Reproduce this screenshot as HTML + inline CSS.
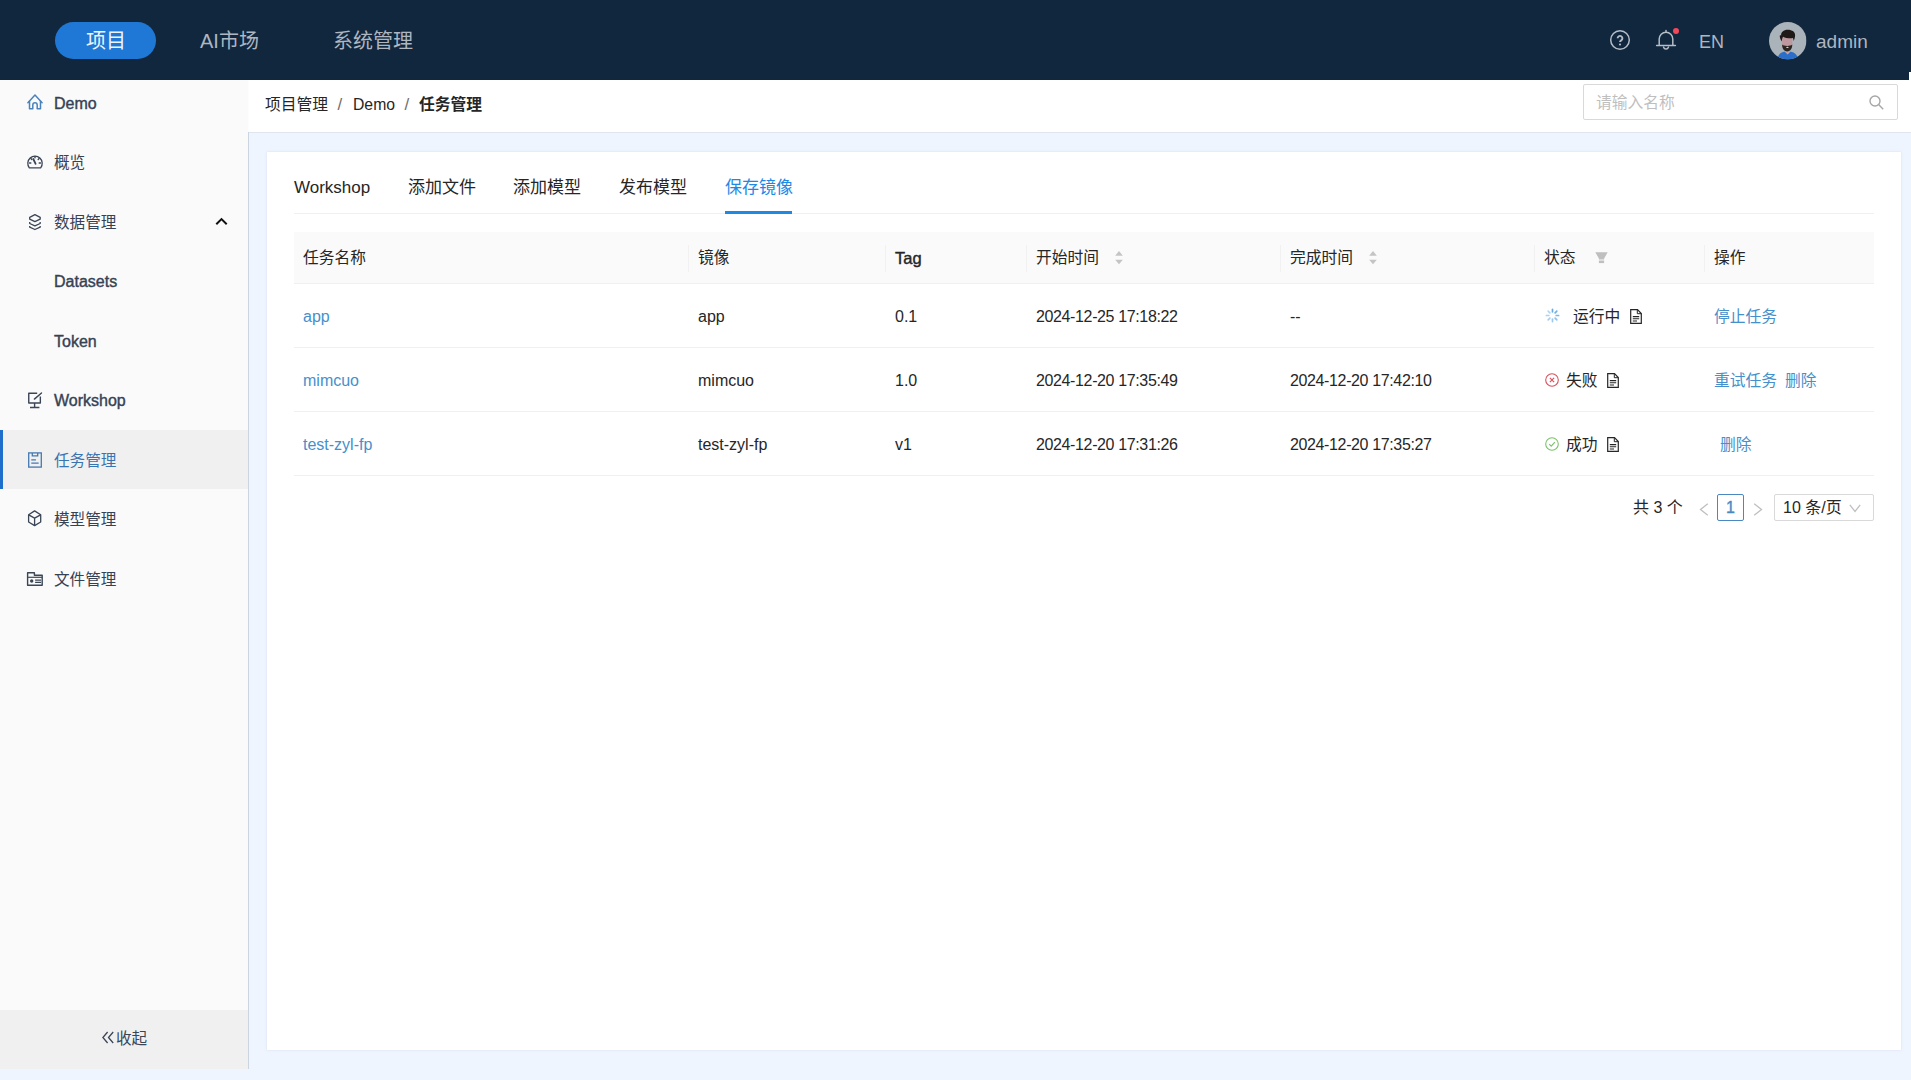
<!DOCTYPE html>
<html lang="zh-CN">
<head>
<meta charset="utf-8">
<title>任务管理</title>
<style>
*{box-sizing:border-box;margin:0;padding:0}
html,body{width:1911px;height:1080px;overflow:hidden}
body{position:relative;background:#eef5fe;font-family:"Liberation Sans","Noto Sans CJK SC",sans-serif;color:#262626;font-size:16px}
.abs{position:absolute;white-space:nowrap}
svg{display:block}
/* header */
#hdr{position:absolute;left:0;top:0;width:1909px;height:80px;background:#11273e}
#hdr-r{position:absolute;left:1909px;top:0;width:2px;height:72px;background:#11273e}
#hdr-n{position:absolute;left:1909px;top:72px;width:2px;height:8px;background:#fff}
.pill{position:absolute;left:55px;top:22px;width:101px;height:37px;border-radius:19px;background:#1f78d6}
.nav{position:absolute;top:0;height:80px;line-height:82px;font-size:20px;color:#adb6c1;white-space:nowrap}
.nav.on{color:#eef3f9}
/* sidebar */
#side{position:absolute;left:0;top:80px;width:249px;height:989px;background:#fafafa;border-right:1px solid #cbd5e0}
.mi{position:absolute;left:0;width:248px;height:59px;line-height:61px;color:#364253;font-size:15.600px;white-space:nowrap}
.mi .t{position:absolute;left:54px;top:0}
.lat{font-size:16px;-webkit-text-stroke:.400px currentColor;margin-top:-.500px}
.ic{position:absolute;overflow:visible}
.mi.sel{background:#f0f0f0;color:#3a74b0}
.mi.sel:before{content:"";position:absolute;left:0;top:0;width:3px;height:59px;background:#1e6fcb}
#fold{position:absolute;left:0;top:930px;width:248px;height:59px;background:#f0f0f0;line-height:58px;color:#3a4656;font-size:15.600px;}
/* breadcrumb bar */
#bar{position:absolute;left:249px;top:80px;width:1662px;height:53px;background:#fff;border-bottom:1px solid #dfe6ee}
.bc{position:absolute;top:0;height:52px;line-height:49px;font-size:15.750px;color:#262626;white-space:nowrap}
#search{position:absolute;left:1334px;top:4px;width:315px;height:36px;border:1px solid #d9d9d9;border-radius:2px}
#search .ph{position:absolute;left:12px;top:0;line-height:36px;font-size:15.750px;color:#bfbfbf}
/* card */
#card{position:absolute;left:267px;top:152px;width:1634px;height:898px;background:#fff;box-shadow:0 0 2px rgba(200,205,225,.6)}
.tab{position:absolute;top:21px;height:30px;line-height:30px;font-size:17px;color:#262626;white-space:nowrap}
.tab.on{color:#1e88e5}
#tabline{position:absolute;left:27px;top:61px;width:1580px;height:1px;background:#f0f0f0}
#ink{position:absolute;left:458px;top:59px;width:67px;height:3px;background:#1e88e5}
/* table */
#thead{position:absolute;left:27px;top:80px;width:1580px;height:52px;background:#fafafa;border-bottom:1px solid #f0f0f0}
.th{position:absolute;top:80px;height:52px;line-height:52px;font-size:15.750px;color:#262626;white-space:nowrap}
.sep{position:absolute;top:93px;width:1px;height:27px;background:#f1f1f1}
.row{position:absolute;left:27px;width:1580px;height:64px;border-bottom:1px solid #f0f0f0}
.td{position:absolute;height:64px;line-height:66px;font-size:15.750px;color:#262626;white-space:nowrap}
.lk{color:#4590cc}
.en{font-size:16px}
.dt{letter-spacing:-.370px;font-size:16px}
.pg{position:absolute;top:342px;height:27px;line-height:28px;font-size:16px;color:#262626;white-space:nowrap}
.pbox{position:absolute;top:342px;height:27px;line-height:26px;font-size:16px;color:#262626;white-space:nowrap;border:1px solid #d9d9d9;border-radius:2px}
</style>
</head>
<body>
<div id="hdr"></div><div id="hdr-r"></div><div id="hdr-n"></div>
<div class="pill"></div>

<svg class="ic" style="left:1609px;top:29px" width="22" height="22" viewBox="0 0 22 22" fill="none" stroke="#b4bdc8" stroke-width="1.5"><circle cx="11" cy="11" r="9.3"/><path d="M8.600 9.300a2.400 2.400 0 1 1 3.600 2.100c-.8.500-1.200.9-1.200 1.700" stroke-width="1.900" stroke-linecap="butt"/><circle cx="11" cy="15.500" r="1.100" fill="#b4bdc8" stroke="none"/></svg>
<svg class="ic" style="left:1655px;top:29.400px" width="22" height="22" viewBox="0 0 22 22" fill="none" stroke="#b4bdc8" stroke-width="1.5" stroke-linecap="round" stroke-linejoin="round"><path d="M1.6 16.6h18.8M4.2 16.4V10a6.8 6.8 0 0 1 13.6 0v6.4M11 3.2V1.6M8.6 18.2a2.5 2.5 0 0 0 4.8 0"/></svg>
<div class="abs" style="left:1673px;top:28px;width:6px;height:6px;border-radius:50%;background:#f5475b"></div>
<svg class="ic" style="left:1768.800px;top:21.700px" width="37.500" height="37.500" viewBox="0 0 37.500 37.500"><defs><clipPath id="av"><circle cx="18.750" cy="18.750" r="18.750"/></clipPath></defs><g clip-path="url(#av)"><rect width="37.500" height="37.500" fill="#aab2ba"/><path d="M8.500 37.500c.5-5.500 3.500-7.900 10.100-7.900s9.600 2.400 10.100 7.900z" fill="#2c6fc9"/><path d="M15.800 29.700l2.800 2.800 2.800-2.800-.8-2.500h-4z" fill="#c5a3a8"/><path d="M13.100 16c0-2 10.200-2 10.200 0v7.500c0 2-2 4-5.100 4s-5.100-2-5.100-4z" fill="#bd999f"/><path d="M13.200 22.600c1.200 1 2.600 1.400 5 1.400s3.800-.4 5-1.400c.3 3.600-1.700 6.900-5 6.900s-5.300-3.300-5-6.900z" fill="#2b2620"/><ellipse cx="18.400" cy="25.300" rx="1.300" ry=".6" fill="#e8e0d8"/><path d="M12.800 19.500c-1.400-2.200-2.300-4.600-2-6.100.5-.2 1 0 1.300.3-.3-3.400 2.500-5.900 6.500-5.900 4.700 0 7.900 2.200 7.500 6.200-.2 1.900-.8 3.600-1.500 5-.1-1.300-.3-2.200-.8-3-2.800.6-7 .2-9.700-1.300-.9 1.300-1.200 2.900-1.300 4.800z" fill="#1f1a17"/></g></svg>
<div class="nav on" style="left:86px">项目</div>
<div class="nav" style="left:200px">AI市场</div>
<div class="nav" style="left:333px">系统管理</div>
<div class="nav" style="left:1699px;font-size:18px;top:1px">EN</div>
<div class="nav" style="left:1816px;font-size:19px;top:.500px">admin</div>

<div id="side">
  <div class="mi" style="top:-7px"><span class="t lat">Demo</span></div>
  <svg class="ic" style="left:27px;top:13.500px" width="16" height="16.500" viewBox="0 0 16 16" preserveAspectRatio="none" fill="none" stroke="#4a82bd" stroke-width="1.500" stroke-linejoin="round" stroke-linecap="round"><path d="M.9 8.400L8 1l7.100 7.400"/><path d="M2.500 7v7.400h3.300v-3.800a2.200 2.200 0 0 1 4.400 0v3.800h3.300V7"/></svg>
  <div class="mi" style="top:52px"><span class="t">概览</span></div>
  <svg class="ic" style="left:27px;top:74px" width="16" height="15" viewBox="0 0 16 15" fill="none" stroke="#3a4656" stroke-width="1.3" stroke-linecap="round" stroke-linejoin="round"><path d="M2.300 13.800A7.200 7.200 0 1 1 13.700 13.800z"/><path d="M8.600 9.800L6.300 5" stroke-width="1.800"/><path d="M8 2.400v1.300M3.800 9H2.500M13.500 9h-1.300M3.900 4.600l.9.900M12.100 4.600l-.9.900" stroke-width="1.400"/></svg>
  <div class="mi" style="top:112px"><span class="t">数据管理</span></div>
  <svg class="ic" style="left:29px;top:134px" width="12" height="16" viewBox="0 0 12 16" fill="none" stroke="#3a4656" stroke-width="1.300" stroke-linejoin="round" stroke-linecap="butt"><path d="M5.900.700L11.200 3.300v1.900L5.900 7.600.7 5.200V3.300z"/><path d="M.7 7.900v1.600L5.900 11.900l5.300-2.400V7.900"/><path d="M.7 11.900v1.300L5.900 15.500l5.300-2.300v-1.300"/></svg>
  <svg class="ic" style="left:215px;top:137px" width="13" height="9" viewBox="0 0 13 9" fill="none" stroke="#111" stroke-width="2"><path d="M1.300 7.300L6.500 2.100l5.200 5.200"/></svg>
  <div class="mi" style="top:171px"><span class="t lat">Datasets</span></div>
  <div class="mi" style="top:231px"><span class="t lat">Token</span></div>
  <div class="mi" style="top:290px"><span class="t lat">Workshop</span></div>
  <svg class="ic" style="left:27px;top:311.500px" width="16" height="17" viewBox="0 0 16 17" fill="none" stroke="#3a4656" stroke-width="1.400" stroke-linejoin="round" stroke-linecap="butt"><path d="M10.200 1.250H1.750V11h11.600V4.400"/><path d="M14.500 1L7.400 7.100" stroke-linecap="round"/><path d="M7.600 11v4.500M3 15.550h9.400"/></svg>
  <div class="mi sel" style="top:350px"><span class="t">任务管理</span></div>
  <svg class="ic" style="left:28px;top:372px" width="14" height="16" viewBox="0 0 14 16" fill="none" stroke="#4479b0" stroke-width="1.300" stroke-linejoin="miter"><rect x=".7" y=".9" width="12.600" height="14.200"/><path d="M4.300 1v2.800h5.400V1"/><path d="M3.300 7.900h4.600M3.300 11.200h7.400"/></svg>
  <div class="mi" style="top:409px"><span class="t">模型管理</span></div>
  <svg class="ic" style="left:28px;top:430px" width="14" height="16" viewBox="0 0 14 16" fill="none" stroke="#3a4656" stroke-width="1.300" stroke-linejoin="round"><path d="M6.600.900l6.100 3.900v7.200l-6.100 3.600-6-3.600V4.800z"/><path d="M.7 4.900l5.900 3.200 6-3.200M6.600 8.100v7.400"/></svg>
  <div class="mi" style="top:469px"><span class="t">文件管理</span></div>
  <svg class="ic" style="left:27px;top:492px" width="16" height="14" viewBox="0 0 16 14" fill="none" stroke="#3a4656" stroke-width="1.400" stroke-linejoin="round"><path d="M.6.800h6.800v2.500h7.800v9.900H.6z"/><path d="M.6 5.300h14.600" stroke-width="1.200"/><circle cx="4.700" cy="9" r="1.700" fill="#3a4656" stroke="none"/><path d="M8.100 8.100h6M8.100 10.300h6" stroke-width="1.300"/></svg>
  <div id="fold"><svg class="ic" style="left:102px;top:21px" width="12" height="13" viewBox="0 0 12 13" fill="none" stroke="#3a4656" stroke-width="1.300"><path d="M5.600 1L.9 6.500 5.600 12M11.200 1L6.500 6.500 11.200 12"/></svg><span class="abs" style="left:116px;top:0">收起</span></div>
</div>

<div class="abs" style="left:248px;top:80px;width:1px;height:52px;background:#fdfdfe"></div>
<div id="bar">
  <div class="bc" style="left:16px">项目管理</div>
  <div class="bc" style="left:88.500px;color:#707070;font-size:17px">/</div>
  <div class="bc" style="left:104px">Demo</div>
  <div class="bc" style="left:155.500px;color:#707070;font-size:17px">/</div>
  <div class="bc" style="left:170px;font-weight:bold">任务管理</div>
  <div id="search"><span class="ph">请输入名称</span><svg class="ic" style="left:284.5px;top:10px" width="15" height="15" viewBox="0 0 15 15" fill="none" stroke="#a6a6a6" stroke-width="1.400"><circle cx="6" cy="6" r="5"/><path d="M9.600 9.600l4.600 4.600"/></svg></div>
</div>

<div id="card">
  <div class="tab" style="left:27px">Workshop</div>
  <div class="tab" style="left:141px">添加文件</div>
  <div class="tab" style="left:246px">添加模型</div>
  <div class="tab" style="left:352px">发布模型</div>
  <div class="tab on" style="left:458px">保存镜像</div>
  <div id="tabline"></div><div id="ink"></div>
  <div id="thead"></div>
  <div class="th" style="left:36px">任务名称</div>
  <div class="th" style="left:431px">镜像</div>
  <div class="th" style="left:628px;font-size:16.500px;-webkit-text-stroke:.400px #262626">Tag</div>
  <div class="th" style="left:769px">开始时间</div>
  <div class="th" style="left:1023px">完成时间</div>
  <div class="th" style="left:1277px">状态</div>
  <div class="th" style="left:1447px">操作</div>
  <div class="sep" style="left:421px"></div><div class="sep" style="left:618px"></div><div class="sep" style="left:759px"></div><div class="sep" style="left:1013px"></div><div class="sep" style="left:1267px"></div><div class="sep" style="left:1437px"></div>

  <div class="row" style="top:132px"></div>
  <div class="row" style="top:196px"></div>
  <div class="row" style="top:260px"></div>

  <!-- row 1 -->
  <div class="td lk en" style="left:36px;top:132px">app</div>
  <div class="td en" style="left:431px;top:132px">app</div>
  <div class="td en" style="left:628px;top:132px">0.1</div>
  <div class="td dt" style="left:769px;top:132px">2024-12-25 17:18:22</div>
  <div class="td en" style="left:1023px;top:132px">--</div>
  <div class="td" style="left:1306px;top:132px">运行中</div>
  <div class="td lk" style="left:1447px;top:132px">停止任务</div>
  <!-- row 2 -->
  <div class="td lk en" style="left:36px;top:196px">mimcuo</div>
  <div class="td en" style="left:431px;top:196px">mimcuo</div>
  <div class="td en" style="left:628px;top:196px">1.0</div>
  <div class="td dt" style="left:769px;top:196px">2024-12-20 17:35:49</div>
  <div class="td dt" style="left:1023px;top:196px">2024-12-20 17:42:10</div>
  <div class="td" style="left:1299px;top:196px">失败</div>
  <div class="td lk" style="left:1447px;top:196px">重试任务</div>
  <div class="td lk" style="left:1518px;top:196px">删除</div>
  <!-- row 3 -->
  <div class="td lk en" style="left:36px;top:260px">test-zyl-fp</div>
  <div class="td en" style="left:431px;top:260px">test-zyl-fp</div>
  <div class="td en" style="left:628px;top:260px">v1</div>
  <div class="td dt" style="left:769px;top:260px">2024-12-20 17:31:26</div>
  <div class="td dt" style="left:1023px;top:260px">2024-12-20 17:35:27</div>
  <div class="td" style="left:1299px;top:260px">成功</div>
  <div class="td lk" style="left:1453px;top:260px">删除</div>

<svg class="ic" style="left:847.7px;top:99px" width="8" height="13.500" viewBox="0 0 9 15" preserveAspectRatio="none" fill="#c4c4c4"><path d="M4.500 0L8.800 5.200H.2z"/><path d="M4.500 14.800L8.800 9.600H.2z"/></svg><svg class="ic" style="left:1101.7px;top:99px" width="8" height="13.500" viewBox="0 0 9 15" preserveAspectRatio="none" fill="#c4c4c4"><path d="M4.500 0L8.800 5.200H.2z"/><path d="M4.500 14.800L8.800 9.600H.2z"/></svg><svg class="ic" style="left:1327.5px;top:100px" width="13" height="12" viewBox="0 0 13 12" fill="#bfbfbf"><path d="M.3.300h12.400L9.100 6.400v1.100H3.900V6.400z"/><rect x="3.900" y="8.500" width="5.200" height="2.600"/></svg><svg class="ic" style="left:1278.500px;top:157.200px" width="13" height="13" viewBox="0 0 13 13" fill="none" stroke="#69ace4" stroke-width="1.700" stroke-linecap="round"><path d="M6.50 2.80L6.50 0.40" opacity="1"/><path d="M9.12 3.88L10.81 2.19" opacity="0.95"/><path d="M10.20 6.50L12.60 6.50" opacity="0.85"/><path d="M9.12 9.12L10.81 10.81" opacity="0.75"/><path d="M6.50 10.20L6.50 12.60" opacity="0.65"/><path d="M3.88 9.12L2.19 10.81" opacity="0.6"/><path d="M2.80 6.50L0.40 6.50" opacity="0.55"/><path d="M3.88 3.88L2.19 2.19" opacity="0.5"/></svg><svg class="ic" style="left:1278px;top:221px" width="14" height="14" viewBox="0 0 14 14" fill="none" stroke="#d9505c" stroke-width="1.100"><circle cx="7" cy="7" r="6.300"/><path d="M4.900 4.900l4.200 4.200M9.100 4.900L4.900 9.100" stroke-width="1.200"/></svg><svg class="ic" style="left:1278px;top:285px" width="14" height="14" viewBox="0 0 14 14" fill="none" stroke="#7cc36a" stroke-width="1.100"><circle cx="7" cy="7" r="6.300"/><path d="M4.200 7.200l2 2 3.700-4" stroke-width="1.200"/></svg><svg class="ic" style="left:1363px;top:156.5px" width="12" height="15" viewBox="0 0 12 15" fill="none" stroke="#262626" stroke-width="1.200" stroke-linejoin="miter"><path d="M.7.700h6.800l3.800 3.800v9.800H.7z"/><path d="M7.300.900v3.800h3.800" stroke-width="1"/><path d="M2.800 7.600h6.400M2.800 9.800h6.400M2.800 12h4.200" stroke-width="1.100"/></svg><svg class="ic" style="left:1340px;top:220.5px" width="12" height="15" viewBox="0 0 12 15" fill="none" stroke="#262626" stroke-width="1.200" stroke-linejoin="miter"><path d="M.7.700h6.800l3.800 3.800v9.800H.7z"/><path d="M7.300.900v3.800h3.800" stroke-width="1"/><path d="M2.800 7.600h6.400M2.800 9.800h6.400M2.800 12h4.200" stroke-width="1.100"/></svg><svg class="ic" style="left:1340px;top:284.5px" width="12" height="15" viewBox="0 0 12 15" fill="none" stroke="#262626" stroke-width="1.200" stroke-linejoin="miter"><path d="M.7.700h6.800l3.800 3.800v9.800H.7z"/><path d="M7.300.900v3.800h3.800" stroke-width="1"/><path d="M2.800 7.600h6.400M2.800 9.800h6.400M2.800 12h4.200" stroke-width="1.100"/></svg><svg class="ic" style="left:1432px;top:350.5px" width="10" height="13" viewBox="0 0 10 13" fill="none" stroke="#bfbfbf" stroke-width="1.300"><path d="M8.800.800L1.500 6.500l7.300 5.700"/></svg><svg class="ic" style="left:1486px;top:350.5px" width="10" height="13" viewBox="0 0 10 13" fill="none" stroke="#bfbfbf" stroke-width="1.300"><path d="M1.200.800L8.500 6.500l-7.300 5.700"/></svg><svg class="ic" style="left:1582px;top:351.5px" width="12" height="9" viewBox="0 0 12 9" fill="none" stroke="#bfbfbf" stroke-width="1.300"><path d="M.8.800L6 7.500 11.200.8"/></svg>
  <!-- pagination -->
  <div class="pg" style="left:1366px">共 3 个</div>
  <div class="pbox" style="left:1450px;width:27px;border-color:#4a88c2;color:#4a88c2;text-align:center;-webkit-text-stroke:.350px #4a88c2">1</div>
  <div class="pbox" style="left:1507px;width:100px;border-color:#d9d9d9;padding-left:8px">10 条/页</div>
</div>
</body>
</html>
